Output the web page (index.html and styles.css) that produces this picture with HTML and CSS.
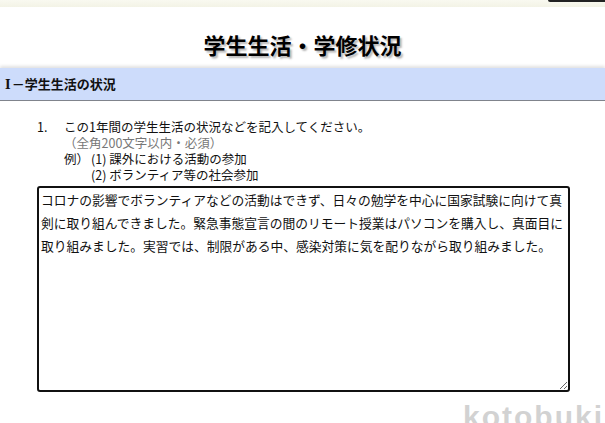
FILE: index.html
```html
<!DOCTYPE html>
<html lang="ja">
<head>
<meta charset="utf-8">
<title>学生生活・学修状況</title>
<link rel="stylesheet" href="styles.css">
</head>
<body>
<div class="topbar"><span class="topbar-tab"></span></div>
<h1 class="page-title">学生生活・学修状況</h1>
<h2 class="section-head"><span class="roman">Ⅰ</span>－学生生活の状況</h2>
<div class="question">
  <div class="q-row">
    <span class="q-num">1.</span>
    <div class="q-body">
      <p class="q-line">この1年間の学生生活の状況などを記入してください。</p>
      <p class="q-line q-note">（全角200文字以内・必須）</p>
      <div class="q-example">
        <span class="q-label">例）</span>
        <div class="q-items">
          <p class="q-line">(1) 課外における活動の参加</p>
          <p class="q-line">(2) ボランティア等の社会参加</p>
        </div>
      </div>
    </div>
  </div>
  <textarea class="answer">コロナの影響でボランティアなどの活動はできず、日々の勉学を中心に国家試験に向けて真剣に取り組んできました。緊急事態宣言の間のリモート授業はパソコンを購入し、真面目に取り組みました。実習では、制限がある中、感染対策に気を配りながら取り組みました。</textarea>
</div>
<div class="watermark">kotobuki</div>
</body>
</html>
```

FILE: styles.css
```css
html, body {
  margin: 0;
  padding: 0;
  background: #fff;
}

body {
  position: relative;
  width: 605px;
  height: 423px;
  overflow: hidden;
  font-family: "Noto Sans CJK JP", "Noto Sans", sans-serif;
  color: #111;
}

.topbar {
  height: 7px;
  background: linear-gradient(#f9f9f0, #f3f3e6);
  display: flex;
  justify-content: flex-end;
}

.topbar-tab {
  width: 57px;
  height: 2px;
  background: #222;
  border-bottom-left-radius: 2px;
}

.page-title {
  margin: 0;
  padding: 22px 0 9px;
  text-align: center;
  font-size: 22px;
  line-height: 30px;
  font-weight: 700;
  color: #000;
  text-shadow: 2px 2px 2px #b5b5b5;
}

.section-head {
  margin: 0;
  height: 32px;
  padding-left: 5px;
  background: #cddcfb;
  border-bottom: 1px solid #80848c;
  box-shadow: 0 -2px 3px rgba(0, 0, 0, 0.12);
  font-size: 13px;
  line-height: 32px;
  font-weight: 700;
  color: #111;
}

.roman {
  font-family: "DejaVu Serif", "Liberation Serif", serif;
  font-size: 12px;
  margin-right: 1px;
}

.question {
  padding: 18px 0 0 37px;
}

.q-row {
  display: flex;
}

.q-num {
  width: 27px;
  font-size: 12.5px;
  line-height: 16px;
}

.q-line {
  margin: 0;
  font-size: 12.5px;
  line-height: 16px;
  white-space: nowrap;
}

.q-note {
  color: #777;
}

.q-example {
  display: flex;
}

.q-label {
  width: 27px;
  font-size: 12.5px;
  line-height: 16px;
}

.answer {
  display: block;
  box-sizing: border-box;
  width: 533px;
  height: 206px;
  margin-top: 3px;
  padding: 0 2px;
  border: 2px solid #111;
  border-radius: 3px;
  font-family: "Noto Sans CJK JP", sans-serif;
  font-size: 12.75px;
  line-height: 23px;
  color: #111;
  resize: both;
  overflow: hidden;
  outline: none;
}

.watermark {
  position: absolute;
  left: 463px;
  top: 400px;
  font-family: "Liberation Sans", Arial, sans-serif;
  font-size: 30px;
  font-weight: 700;
  letter-spacing: 2px;
  color: #d2d2d2;
  line-height: 34px;
}
```
